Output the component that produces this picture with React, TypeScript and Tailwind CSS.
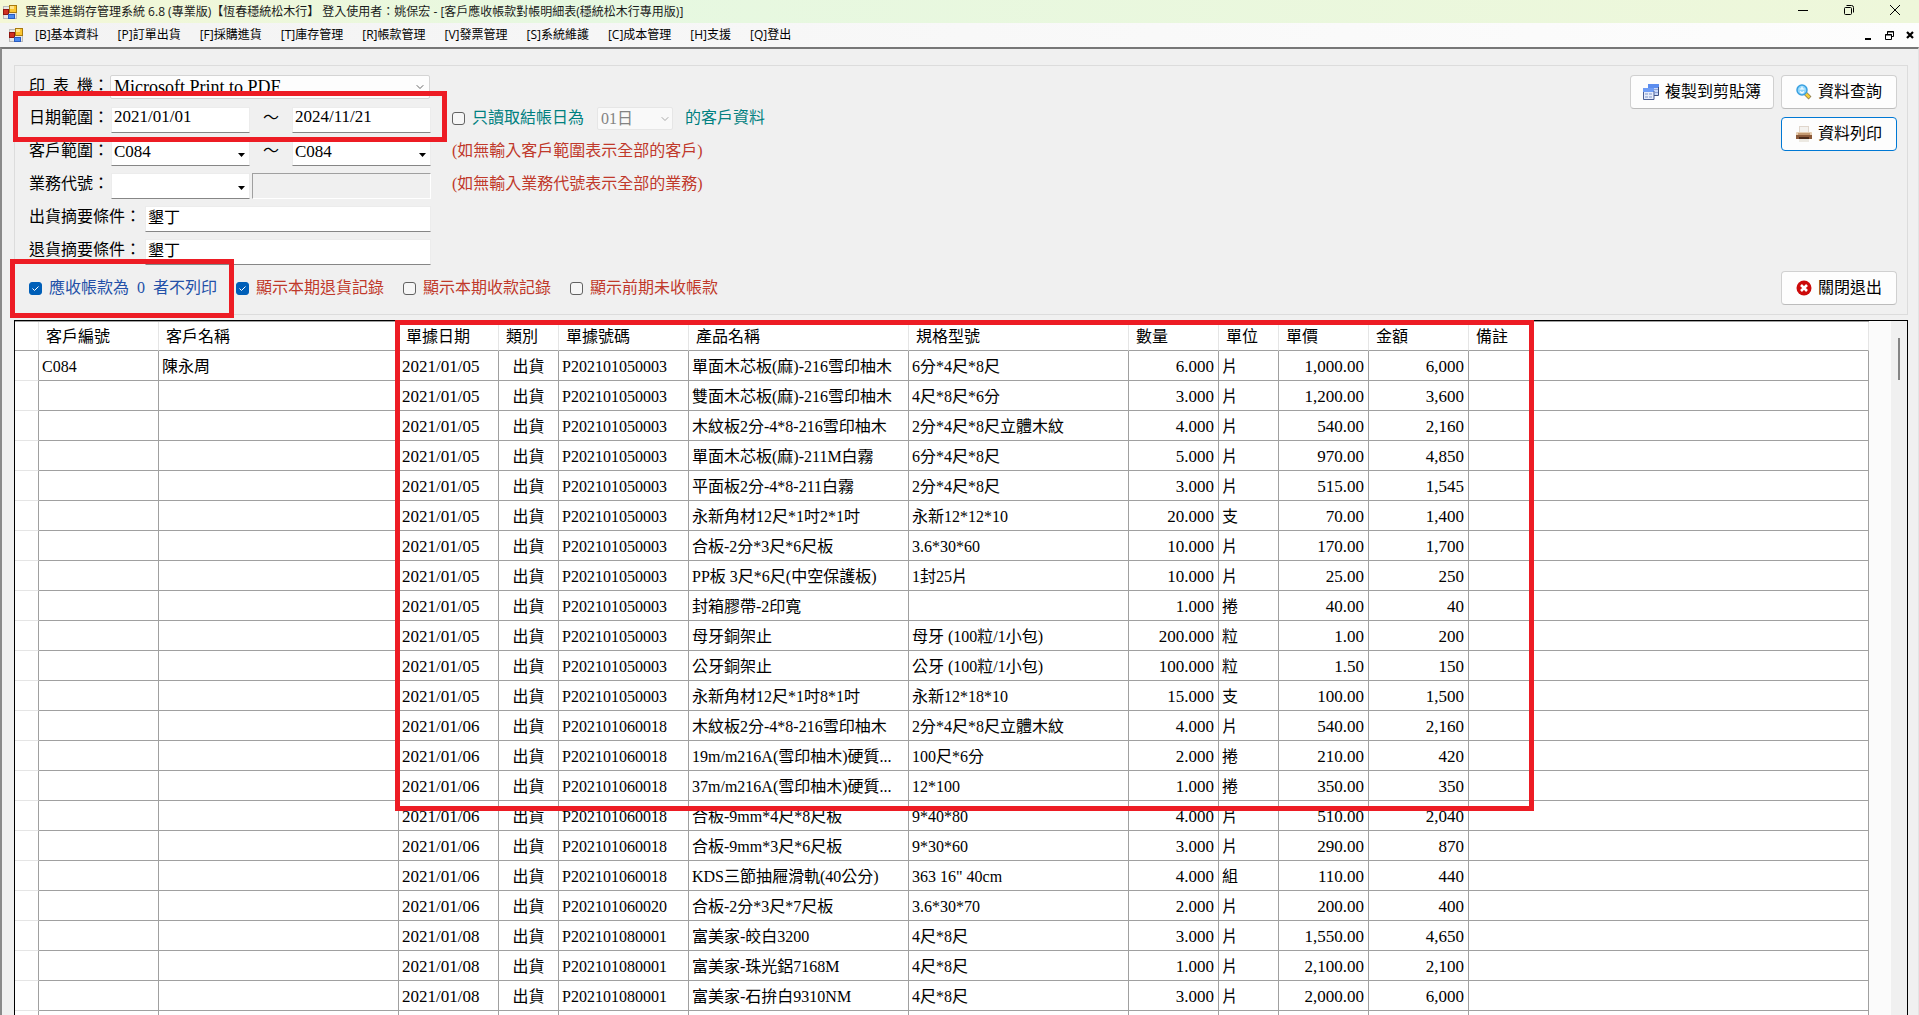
import { ReactNode } from 'react';
import { ChevronDown } from 'lucide-react';
import clsx from 'clsx';

const menus = [
  '[B]基本資料',
  '[P]訂單出貨',
  '[F]採購進貨',
  '[T]庫存管理',
  '[R]帳款管理',
  '[V]發票管理',
  '[S]系統維護',
  '[C]成本管理',
  '[H]支援',
  '[Q]登出',
];

const columns = [
  { title: '', width: 'w-[24px]' },
  { title: '客戶編號', width: 'w-[120px]' },
  { title: '客戶名稱', width: 'w-[240px]' },
  { title: '單據日期', width: 'w-[100px]' },
  { title: '類別', width: 'w-[60px]' },
  { title: '單據號碼', width: 'w-[130px]' },
  { title: '產品名稱', width: 'w-[220px]' },
  { title: '規格型號', width: 'w-[220px]' },
  { title: '數量', width: 'w-[90px]' },
  { title: '單位', width: 'w-[60px]' },
  { title: '單價', width: 'w-[90px]' },
  { title: '金額', width: 'w-[100px]' },
  { title: '備註', width: '' },
];

// 日期, 單號, 品名, 規格, 數量, 單位, 單價, 金額
const rows = [
  ['2021/01/05', 'P202101050003', '單面木芯板(麻)-216雪印柚木', '6分*4尺*8尺', '6.000', '片', '1,000.00', '6,000'],
  ['2021/01/05', 'P202101050003', '雙面木芯板(麻)-216雪印柚木', '4尺*8尺*6分', '3.000', '片', '1,200.00', '3,600'],
  ['2021/01/05', 'P202101050003', '木紋板2分-4*8-216雪印柚木', '2分*4尺*8尺立體木紋', '4.000', '片', '540.00', '2,160'],
  ['2021/01/05', 'P202101050003', '單面木芯板(麻)-211M白霧', '6分*4尺*8尺', '5.000', '片', '970.00', '4,850'],
  ['2021/01/05', 'P202101050003', '平面板2分-4*8-211白霧', '2分*4尺*8尺', '3.000', '片', '515.00', '1,545'],
  ['2021/01/05', 'P202101050003', '永新角材12尺*1吋2*1吋', '永新12*12*10', '20.000', '支', '70.00', '1,400'],
  ['2021/01/05', 'P202101050003', '合板-2分*3尺*6尺板', '3.6*30*60', '10.000', '片', '170.00', '1,700'],
  ['2021/01/05', 'P202101050003', 'PP板 3尺*6尺(中空保護板)', '1封25片', '10.000', '片', '25.00', '250'],
  ['2021/01/05', 'P202101050003', '封箱膠帶-2印寬', '', '1.000', '捲', '40.00', '40'],
  ['2021/01/05', 'P202101050003', '母牙銅架止', '母牙 (100粒/1小包)', '200.000', '粒', '1.00', '200'],
  ['2021/01/05', 'P202101050003', '公牙銅架止', '公牙 (100粒/1小包)', '100.000', '粒', '1.50', '150'],
  ['2021/01/05', 'P202101050003', '永新角材12尺*1吋8*1吋', '永新12*18*10', '15.000', '支', '100.00', '1,500'],
  ['2021/01/06', 'P202101060018', '木紋板2分-4*8-216雪印柚木', '2分*4尺*8尺立體木紋', '4.000', '片', '540.00', '2,160'],
  ['2021/01/06', 'P202101060018', '19m/m216A(雪印柚木)硬質...', '100尺*6分', '2.000', '捲', '210.00', '420'],
  ['2021/01/06', 'P202101060018', '37m/m216A(雪印柚木)硬質...', '12*100', '1.000', '捲', '350.00', '350'],
  ['2021/01/06', 'P202101060018', '合板-9mm*4尺*8尺板', '9*40*80', '4.000', '片', '510.00', '2,040'],
  ['2021/01/06', 'P202101060018', '合板-9mm*3尺*6尺板', '9*30*60', '3.000', '片', '290.00', '870'],
  ['2021/01/06', 'P202101060018', 'KDS三節抽屜滑軌(40公分)', '363 16" 40cm', '4.000', '組', '110.00', '440'],
  ['2021/01/06', 'P202101060020', '合板-2分*3尺*7尺板', '3.6*30*70', '2.000', '片', '200.00', '400'],
  ['2021/01/08', 'P202101080001', '富美家-皎白3200', '4尺*8尺', '3.000', '片', '1,550.00', '4,650'],
  ['2021/01/08', 'P202101080001', '富美家-珠光鋁7168M', '4尺*8尺', '1.000', '片', '2,100.00', '2,100'],
  ['2021/01/08', 'P202101080001', '富美家-石拚白9310NM', '4尺*8尺', '3.000', '片', '2,000.00', '6,000'],
  ['', '', '', '', '', '', '', ''],
];

const FIELD = 'h-[26px] border border-[#ececec] border-b-[#868686] bg-white px-[2px] pb-[6px] text-black outline-none';

function AppIcon() {
  return (
    <svg width="14" height="14" viewBox="0 0 14 14" aria-hidden="true">
      <rect x="0.5" y="1.5" width="13" height="12" fill="#e8e8e8" stroke="#b9b9b9" />
      <rect x="0.5" y="4.5" width="5" height="5" fill="#d03020" stroke="#8f1410" />
      <rect x="6.5" y="0.5" width="7" height="7" fill="#fbc531" stroke="#a87a10" />
      <rect x="7" y="1" width="4" height="3" fill="#ffe58a" />
      <rect x="5.5" y="9.5" width="6" height="4" fill="#4a8af0" stroke="#2a5cc0" />
    </svg>
  );
}

function CopyIcon() {
  return (
    <svg width="16" height="16" viewBox="0 0 16 16" aria-hidden="true">
      <rect x="5" y="0" width="11" height="11" fill="#c9d8f8" />
      <rect x="5" y="0" width="11" height="4" fill="#5b8def" />
      <path d="M15.5 3v8.5H11" fill="none" stroke="#3c4f80" />
      <path d="M11 5.5h4M12 8.5h3" stroke="#8ea4d8" />
      <rect x="0" y="4" width="11" height="11" fill="#e6ecfa" />
      <rect x="0" y="4" width="11" height="4" fill="#6f9df5" />
      <path d="M0.5 8v7.500h10.500V7" fill="none" stroke="#4a5f96" />
      <path d="M2 10h3M6 10h3M2 13h3M6 13h3" stroke="#7f95c8" />
    </svg>
  );
}

function SearchIcon() {
  return (
    <svg width="16" height="16" viewBox="0 0 16 16" aria-hidden="true">
      <path d="M9 9l5 5" stroke="#8a7a50" strokeWidth="4" />
      <path d="M9 9l4.500 4.500" stroke="#f5cf3c" strokeWidth="2.500" />
      <circle cx="6" cy="6" r="5" fill="#8fd6fb" stroke="#3aa0e0" strokeWidth="1.500" />
      <path d="M6 2.500v3M3.500 5h5M4 7.500l2 1.500 2-1.500" fill="none" stroke="#fff" strokeWidth="1.200" />
    </svg>
  );
}

function PrinterIcon() {
  return (
    <svg width="16" height="16" viewBox="0 0 16 16" aria-hidden="true">
      <rect x="3.500" y="0.500" width="9" height="7" fill="#f4f2ef" stroke="#e0d6cc" />
      <rect x="0" y="6" width="16" height="4" rx="1" fill="#e5cdb2" />
      <rect x="2" y="7" width="12" height="2" fill="#c49a72" />
      <rect x="0" y="9" width="16" height="4" fill="#8b5a3a" />
      <rect x="3" y="11" width="10" height="2" fill="#4a2a1a" />
      <rect x="3" y="13" width="10" height="3" fill="#ece9e2" />
    </svg>
  );
}

function CloseIcon() {
  return (
    <svg width="16" height="16" viewBox="0 0 16 16" aria-hidden="true">
      <circle cx="8" cy="8" r="7.500" fill="#cc0a0a" />
      <path d="M5 5l6 6M11 5l-6 6" stroke="#fff" strokeWidth="2.600" />
    </svg>
  );
}

function ToolButton({ icon, focused, className, children }: { icon: ReactNode; focused?: boolean; className?: string; children: ReactNode }) {
  return (
    <button
      type="button"
      className={clsx(
        'flex h-[34px] items-center justify-center gap-[6px] rounded-[4px] border bg-[#fdfdfd] text-base text-black',
        focused ? 'border-[#0078d4]' : 'border-[#d0d0d0] border-b-[#bcbcbc]',
        className,
      )}
    >
      {icon}
      {children}
    </button>
  );
}

function Check({ id, checked, className, children }: { id: string; checked?: boolean; className: string; children: ReactNode }) {
  return (
    <div className="flex items-center gap-[7px]">
      <span className="relative flex">
        <input
          id={id}
          type="checkbox"
          defaultChecked={checked}
          className="peer size-[13px] appearance-none rounded-[3px] border border-[#626262] bg-[#f6f6f6] checked:border-[#005fb8] checked:bg-[#005fb8]"
        />
        <svg className="pointer-events-none absolute inset-0 hidden peer-checked:block" width="13" height="13" viewBox="0 0 13 13">
          <path d="M3.500 6.500l2 2 4-4" fill="none" stroke="#fff" />
        </svg>
      </span>
      <label htmlFor={id} className={clsx('flex gap-2', className)}>
        {children}
      </label>
    </div>
  );
}

function Combo({ id, label, value }: { id: string; label: string; value: string }) {
  return (
    <div className="relative w-[139px]">
      <select id={id} aria-label={label} className={clsx(FIELD, 'w-full appearance-none text-[17px]')}>
        <option>{value}</option>
      </select>
      <svg className="pointer-events-none absolute right-[5px] top-[13px]" width="7" height="4" viewBox="0 0 7 4">
        <path d="M0 0h7L3.500 4z" fill="#000" />
      </svg>
    </div>
  );
}

function TitleBar() {
  return (
    <header className="flex h-[23px] items-center justify-between bg-linear-to-r from-[#f4f7d6] via-[#e6f8e1] via-30% to-[#eef7da] pl-[3px] pr-px text-xs text-[#1a1a1a]">
      <div className="flex items-center gap-2">
        <AppIcon />
        <h1 className="whitespace-nowrap">
          買賣業進銷存管理系統 6.8 (專業版)【恆春穩統松木行】 登入使用者：姚保宏 - [客戶應收帳款對帳明細表(穩統松木行專用版)]
        </h1>
      </div>
      <div className="flex pb-[3px]">
        <button type="button" aria-label="最小化" className="flex w-[46px] justify-center">
          <svg width="10" height="10" viewBox="0 0 10 10"><path d="M0 5.500h10" stroke="#000" /></svg>
        </button>
        <button type="button" aria-label="還原" className="flex w-[46px] justify-center">
          <svg width="10" height="10" viewBox="0 0 10 10" fill="none" stroke="#000">
            <rect x="0.500" y="2.500" width="7" height="7" rx="1" />
            <path d="M2.500 0.500h5a2 2 0 0 1 2 2v5" />
          </svg>
        </button>
        <button type="button" aria-label="關閉" className="flex w-[46px] justify-center">
          <svg width="10" height="10" viewBox="0 0 10 10"><path d="M0 0l10 10M10 0L0 10" stroke="#000" /></svg>
        </button>
      </div>
    </header>
  );
}

function MenuBar() {
  return (
    <nav className="flex h-6 items-center justify-between bg-linear-to-r from-[#f3f3f3] to-[#fdfdfd] pl-[9px] pr-[5px] text-xs text-black">
      <div className="flex items-center gap-3">
        <AppIcon />
        <div className="flex gap-[19px]">
          {menus.map((m) => (
            <button key={m} type="button" className="whitespace-nowrap">{m}</button>
          ))}
        </div>
      </div>
      <div className="flex items-center gap-3">
        <button type="button" aria-label="最小化子視窗">
          <svg width="8" height="9" viewBox="0 0 8 9"><path d="M0 8h6" stroke="#000" strokeWidth="2" /></svg>
        </button>
        <button type="button" aria-label="還原子視窗">
          <svg width="9" height="9" viewBox="0 0 9 9" fill="none" stroke="#000">
            <path d="M2.500 3V0.500h6v5H7M2 1h7" />
            <path d="M0.500 3.500h6v5h-6zM0 4h7" />
          </svg>
        </button>
        <button type="button" aria-label="關閉子視窗">
          <svg width="8" height="8" viewBox="0 0 8 8"><path d="M1 1l6 6M7 1L1 7" stroke="#000" strokeWidth="2.200" /></svg>
        </button>
      </div>
    </nav>
  );
}

function FilterPanel() {
  return (
    <section className="ml-[11px] mr-[10px] mt-[16px] flex justify-between border border-[#dcdcdc] pb-[9px] pl-[14px] pr-[10px] pt-[9px] text-base leading-[22px] text-black">
      <form className="pb-[6px]">
        <div className="mb-2 flex items-start">
          <label htmlFor="printer" className="flex w-[81px] gap-2">
            <span>印</span>
            <span>表</span>
            <span>機：</span>
          </label>
          <div className="relative w-[320px]">
            <select id="printer" className="h-6 w-full appearance-none rounded-[2px] border border-[#d4d4d4] bg-[#fdfdfd] px-[3px] text-lg leading-[22px]">
              <option>Microsoft Print to PDF</option>
            </select>
            <ChevronDown className="pointer-events-none absolute right-1 top-[6px] size-3 text-[#666]" strokeWidth={2} />
          </div>
        </div>
        <div className="mb-[7px] flex items-start">
          <label htmlFor="dateFrom" className="w-[82px]">日期範圍：</label>
          <input id="dateFrom" type="text" defaultValue="2021/01/01" className={clsx(FIELD, 'w-[139px] text-[17px]')} />
          <span className="w-[42px] text-center">～</span>
          <input aria-label="結束日期" type="text" defaultValue="2024/11/21" className={clsx(FIELD, 'mr-[21px] w-[139px] text-[17px]')} />
          <Check id="closeDay" className="text-[#008080]">只讀取結帳日為</Check>
          <div className="relative ml-[13px] mr-3 w-[76px]">
            <select aria-label="結帳日" disabled className="h-[23px] w-full appearance-none rounded-[2px] border border-[#e6e6e6] bg-[#f9f9f9] px-[3px] text-base leading-[21px] text-[#838383]">
              <option>01日</option>
            </select>
            <ChevronDown className="pointer-events-none absolute right-[2px] top-[6px] size-3 text-[#a8a8a8]" />
          </div>
          <span className="text-[#008080]">的客戶資料</span>
        </div>
        <div className="mb-[7px] flex items-start">
          <label htmlFor="clientFrom" className="w-[82px]">客戶範圍：</label>
          <Combo id="clientFrom" label="客戶範圍" value="C084" />
          <span className="w-[42px] text-center">～</span>
          <Combo id="clientTo" label="結束客戶" value="C084" />
          <span className="ml-[21px] text-[#c0392b]">(如無輸入客戶範圍表示全部的客戶)</span>
        </div>
        <div className="mb-[7px] flex items-start">
          <label htmlFor="sales" className="w-[82px]">業務代號：</label>
          <Combo id="sales" label="業務代號" value="" />
          <input aria-label="業務名稱" type="text" readOnly className="ml-[2px] h-[26px] w-[179px] border border-[#a0a0a0] border-b-white border-r-white bg-[#f0f0f0]" />
          <span className="ml-[21px] text-[#c0392b]">(如無輸入業務代號表示全部的業務)</span>
        </div>
        <div className="mb-[7px] flex items-start">
          <label htmlFor="shipNote" className="w-[116px]">出貨摘要條件：</label>
          <input id="shipNote" type="text" defaultValue="墾丁" className={clsx(FIELD, 'w-[286px]')} />
        </div>
        <div className="mb-3 flex items-start">
          <label htmlFor="returnNote" className="w-[116px]">退貨摘要條件：</label>
          <input id="returnNote" type="text" defaultValue="墾丁" className={clsx(FIELD, 'w-[286px]')} />
        </div>
        <div className="flex gap-[19px]">
          <Check id="hideZero" checked className="text-[#2350a8]">
            <span>應收帳款為</span>
            <span>0</span>
            <span>者不列印</span>
          </Check>
          <Check id="showReturn" checked className="text-[#c0392b]">顯示本期退貨記錄</Check>
          <Check id="showReceipt" className="text-[#c0392b]">顯示本期收款記錄</Check>
          <Check id="showPrev" className="text-[#c0392b]">顯示前期未收帳款</Check>
        </div>
      </form>
      <div className="flex flex-col justify-between">
        <div className="grid grid-cols-[144px_116px] gap-x-[7px] gap-y-2">
          <ToolButton icon={<CopyIcon />}>複製到剪貼簿</ToolButton>
          <ToolButton icon={<SearchIcon />}>資料查詢</ToolButton>
          <ToolButton icon={<PrinterIcon />} focused className="col-start-2">資料列印</ToolButton>
        </div>
        <ToolButton icon={<CloseIcon />} className="w-[116px] self-end">關閉退出</ToolButton>
      </div>
    </section>
  );
}

const TD = 'h-[30px] overflow-hidden border-b border-r border-[#a0a0a0] px-[3px] pb-0 pt-[2px]';

function DetailTable() {
  return (
    <section className="ml-[11px] mr-[10px] mt-[5px] flex min-h-0 flex-1 overflow-hidden border border-b-0 border-black bg-[#fbfbfb]">
      <div className="min-w-0 flex-1 border-t border-[#a0a0a0]">
        <table className="w-full table-fixed border-separate border-spacing-0 whitespace-nowrap bg-white text-base leading-6 text-black">
          <colgroup>
            {columns.map((c, i) => (
              <col key={i} className={c.width} />
            ))}
          </colgroup>
          <thead>
            <tr>
              {columns.map((c, i) => (
                <th key={i} className="h-[29px] border-b border-r border-b-[#a0a0a0] border-r-[#e5e5e5] px-[7px] pb-0 pt-[2px] text-left font-normal">
                  {c.title}
                </th>
              ))}
            </tr>
          </thead>
          <tbody>
            {rows.map((r, i) => (
              <tr key={i}>
                <td className="h-[30px] border-b border-r border-b-[#e5e5e5] border-r-[#a0a0a0] p-0" />
                <td className={TD}>{i === 0 ? 'C084' : ''}</td>
                <td className={TD}>{i === 0 ? '陳永周' : ''}</td>
                <td className={clsx(TD, 'text-[17px]')}>{r[0]}</td>
                <td className={clsx(TD, 'text-center')}>{r[0] && '出貨'}</td>
                <td className={TD}>{r[1]}</td>
                <td className={TD}>{r[2]}</td>
                <td className={TD}>{r[3]}</td>
                <td className={clsx(TD, 'pr-1 text-right text-[17px]')}>{r[4]}</td>
                <td className={TD}>{r[5]}</td>
                <td className={clsx(TD, 'pr-1 text-right text-[17px]')}>{r[6]}</td>
                <td className={clsx(TD, 'pr-1 text-right text-[17px]')}>{r[7]}</td>
                <td className={TD} />
              </tr>
            ))}
          </tbody>
        </table>
      </div>
      <div className="ml-[22px] flex w-4 justify-center bg-[#f0f0f0] pt-[17px]">
        <div className="h-[42px] w-[2px] bg-[#858585]" />
      </div>
    </section>
  );
}

export default function App() {
  return (
    <div className='relative flex h-screen flex-col overflow-hidden bg-[#f0f0f0] font-["Open_Sans","Noto_Sans_CJK_TC",sans-serif]'>
      <TitleBar />
      <MenuBar />
      <main className='flex min-h-0 flex-1 flex-col border-l-2 border-r border-t-2 border-l-[#8a8a8a] border-r-[#e3e3e3] border-t-[#777] pl-px font-["Liberation_Serif","Noto_Sans_CJK_TC",serif]'>
        <FilterPanel />
        <DetailTable />
      </main>

      {/* 紅框標示 */}
      <div className="pointer-events-none absolute left-[13px] top-[91px] h-[51px] w-[434px] border-[5px] border-[#ed1c24]" />
      <div className="pointer-events-none absolute left-[10px] top-[259px] h-[59px] w-[224px] border-[5px] border-[#ed1c24]" />
      <div className="pointer-events-none absolute left-[395px] top-[320px] h-[491px] w-[1139px] border-[5px] border-[#ed1c24]" />
    </div>
  );
}
